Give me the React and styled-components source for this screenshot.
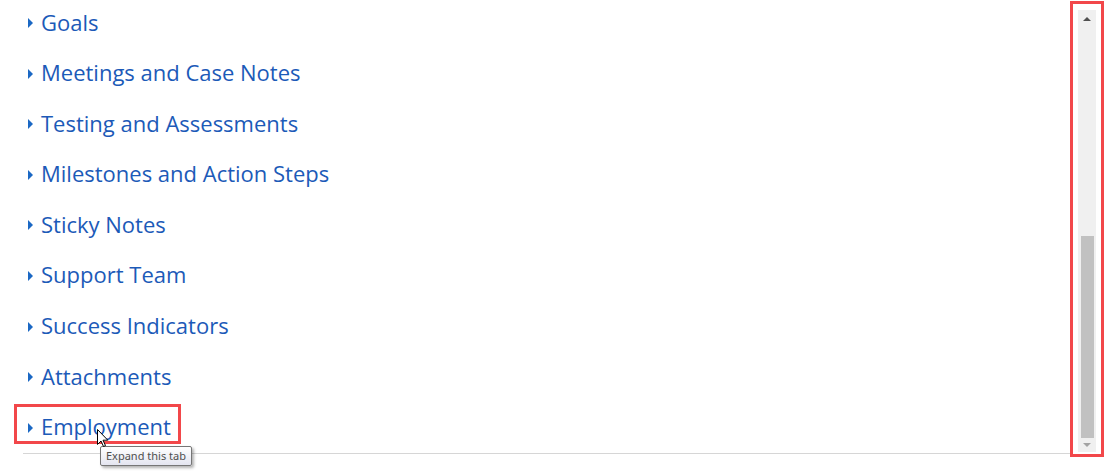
import React from "react";
import styled, { createGlobalStyle } from "styled-components";

const GlobalStyle = createGlobalStyle`
  html, body {
    margin: 0;
    padding: 0;
    background: #ffffff;
    overflow: hidden;
  }
`;

const tabs = [
  "Goals",
  "Meetings and Case Notes",
  "Testing and Assessments",
  "Milestones and Action Steps",
  "Sticky Notes",
  "Support Team",
  "Success Indicators",
  "Attachments",
  "Employment",
];

const Page = styled.div`
  position: relative;
  display: flex;
  width: 1106px;
  height: 471px;
  font-family: "Open Sans", "Noto Sans", sans-serif;
`;

const Main = styled.div`
  flex: 1;
  display: flex;
  flex-direction: column;
  padding-top: 2px;
`;

const TabList = styled.ul`
  list-style: none;
  margin: 0;
  padding: 0 0 0 17px;
  display: flex;
  flex-direction: column;
  gap: 16.6px;
`;

const TabRow = styled.li`
  display: flex;
  align-items: center;
  align-self: flex-start;
  box-sizing: border-box;
  height: 34px;
  padding: 5px 7px 0 11px;
  gap: 8px;
  outline: ${(p) => (p.$highlight ? "3px solid #f2474a" : "none")};
  cursor: pointer;
`;

const Arrow = styled.span`
  width: 0;
  height: 0;
  margin-top: 3px;
  border-top: 5px solid transparent;
  border-bottom: 5px solid transparent;
  border-left: 5.5px solid #1b68c4;
`;

const TabLabel = styled.span`
  font-size: 22px;
  line-height: 26px;
  color: #1c5ab8;
`;

const Divider = styled.div`
  margin: 12px 0 0 23px;
  height: 1px;
  background: #d6d6d6;
`;

const ScrollCol = styled.div`
  box-sizing: border-box;
  width: 34px;
  height: 456px;
  margin: 1px 2px 0 0;
  border: 3px solid #f2474a;
  padding: 6px 5px 2px 5px;
`;

const Track = styled.div`
  height: 100%;
  background: #f0f0f0;
  display: flex;
  flex-direction: column;
  align-items: center;
`;

const ScrollBtn = styled.div`
  height: ${(p) => p.$h}px;
  width: 100%;
  display: flex;
  align-items: center;
  justify-content: center;
`;

const Caret = styled.span`
  width: 0;
  height: 0;
  border-left: 4px solid transparent;
  border-right: 4px solid transparent;
  ${(p) =>
    p.$up
      ? "border-bottom: 4px solid #505050;"
      : "border-top: 4px solid #a3a3a3;"}
`;

const Gap = styled.div`
  flex: 1;
`;

const Thumb = styled.div`
  width: 13px;
  height: 202px;
  background: #c1c1c1;
`;

const Tooltip = styled.div`
  position: absolute;
  left: 100px;
  top: 446px;
  box-sizing: border-box;
  height: 20px;
  padding: 0 5px;
  border: 1px solid #767676;
  border-radius: 2px;
  background: linear-gradient(#ffffff, #e4e5f0);
  box-shadow: 2px 2px 3px rgba(0, 0, 0, 0.3);
  font-family: "Noto Sans", "Open Sans", sans-serif;
  font-size: 11px;
  line-height: 18px;
  color: #4f4f4f;
  white-space: nowrap;
`;

const Cursor = styled.svg`
  position: absolute;
  left: 97px;
  top: 429px;
`;

export default function App() {
  return (
    <Page>
      <GlobalStyle />
      <Main>
        <TabList>
          {tabs.map((t, i) => (
            <TabRow key={t} $highlight={i === tabs.length - 1}>
              <Arrow />
              <TabLabel>{t}</TabLabel>
            </TabRow>
          ))}
        </TabList>
        <Divider />
      </Main>
      <ScrollCol>
        <Track>
          <ScrollBtn $h={18}>
            <Caret $up />
          </ScrollBtn>
          <Gap />
          <Thumb />
          <ScrollBtn $h={14}>
            <Caret />
          </ScrollBtn>
        </Track>
      </ScrollCol>
      <Tooltip>Expand this tab</Tooltip>
      <Cursor width="12" height="19" viewBox="0 0 12 19">
        <path
          d="M0.5 0.5 L0.5 15.5 L4 12 L6.5 17.5 L8.5 16.6 L6 11.2 L10.8 11.2 Z"
          fill="#ffffff"
          stroke="#000000"
          strokeWidth="1"
          strokeLinejoin="round"
        />
      </Cursor>
    </Page>
  );
}
